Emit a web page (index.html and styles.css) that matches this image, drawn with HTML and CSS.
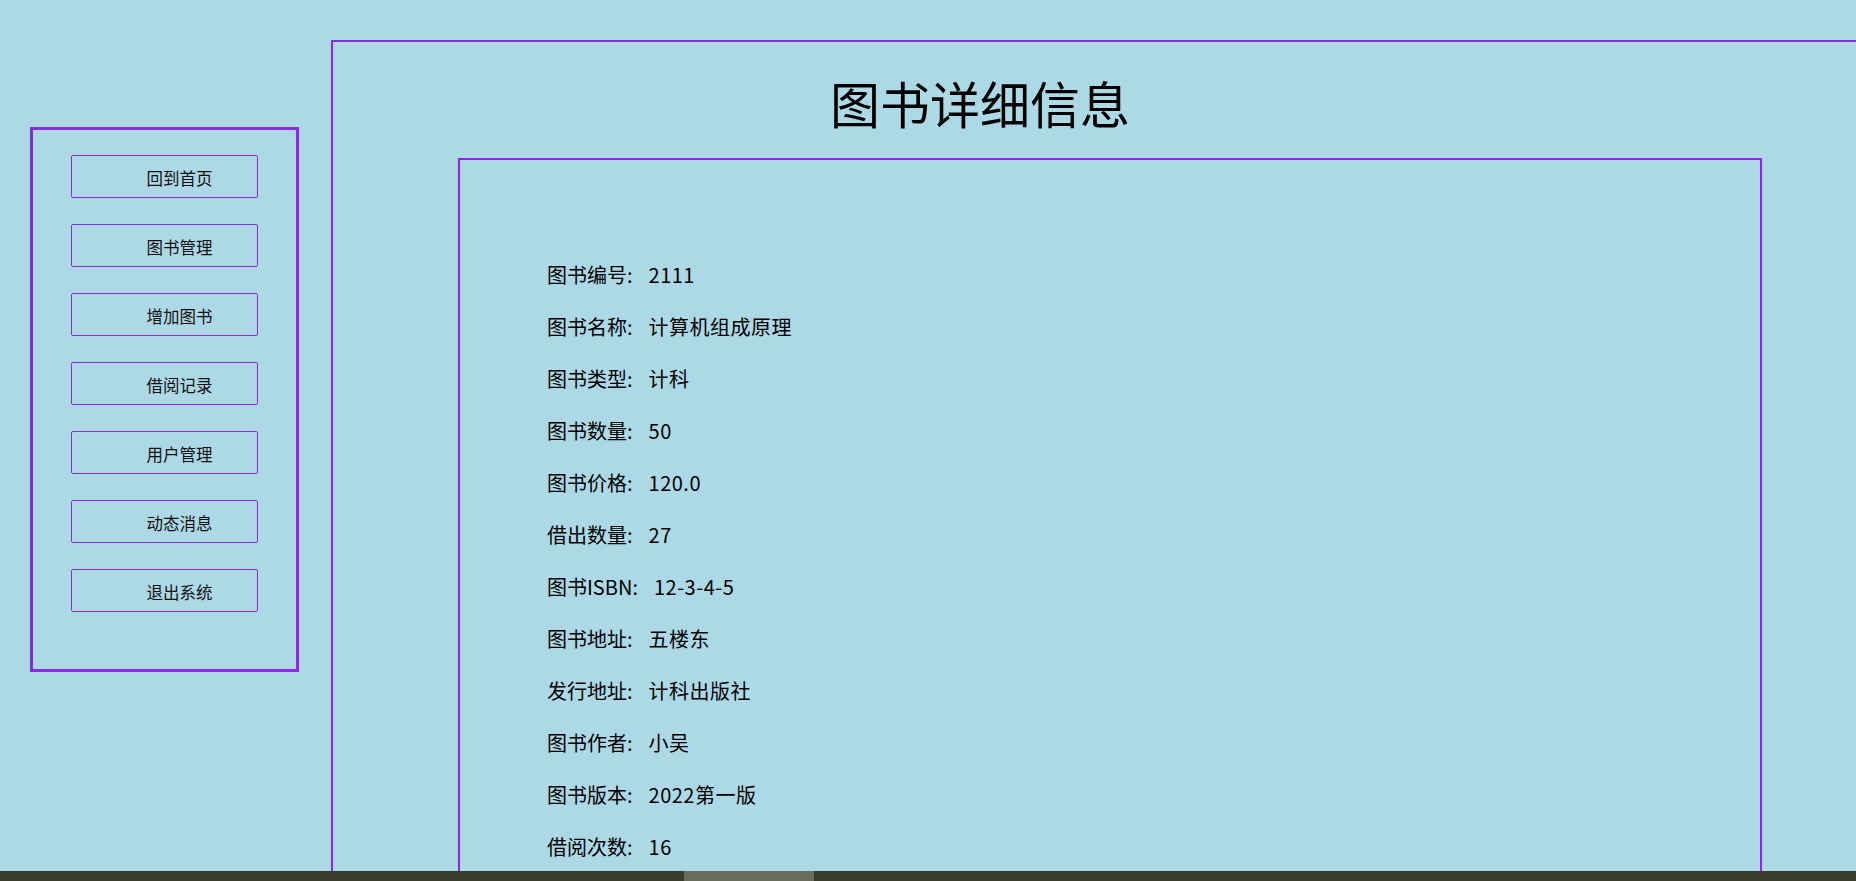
FILE: index.html
```html
<!DOCTYPE html>
<html lang="zh-CN">
<head>
<meta charset="UTF-8" />
<meta name="viewport" content="width=device-width, initial-scale=1" />
<title>图书详细信息</title>
<link rel="stylesheet" href="styles.css">
</head>
<body>

  <div class="page">
    <div class="sidebar">
      <button class="nav-btn">回到首页</button>
      <button class="nav-btn">图书管理</button>
      <button class="nav-btn">增加图书</button>
      <button class="nav-btn">借阅记录</button>
      <button class="nav-btn">用户管理</button>
      <button class="nav-btn">动态消息</button>
      <button class="nav-btn">退出系统</button>
    </div>

    <div class="main">
      <h1 class="title">图书详细信息</h1>

      <div class="detail-box">
        <div class="row"><span class="label">图书编号:</span><span class="value">2111</span></div>
        <div class="row"><span class="label">图书名称:</span><span class="value">计算机组成原理</span></div>
        <div class="row"><span class="label">图书类型:</span><span class="value">计科</span></div>
        <div class="row"><span class="label">图书数量:</span><span class="value">50</span></div>
        <div class="row"><span class="label">图书价格:</span><span class="value">120.0</span></div>
        <div class="row"><span class="label">借出数量:</span><span class="value">27</span></div>
        <div class="row"><span class="label">图书ISBN:</span><span class="value">12-3-4-5</span></div>
        <div class="row"><span class="label">图书地址:</span><span class="value">五楼东</span></div>
        <div class="row"><span class="label">发行地址:</span><span class="value">计科出版社</span></div>
        <div class="row"><span class="label">图书作者:</span><span class="value">小吴</span></div>
        <div class="row"><span class="label">图书版本:</span><span class="value">2022第一版</span></div>
        <div class="row"><span class="label">借阅次数:</span><span class="value">16</span></div>
      </div>
    </div>
  </div>

  <div class="taskbar">
    <span class="task-thumb"></span>
  </div>

</body>
</html>
```

FILE: styles.css
```css
html, body {
  margin: 0;
  overflow: hidden;
}
body {
  font-family: "Noto Sans CJK SC", "Noto Sans", sans-serif;
  background: #add8e6;
  color: #000;
}
.page {
  display: flex;
  align-items: flex-start;
  padding-left: 30px;
}
.sidebar {
  flex-shrink: 0;
  margin-top: 127px;
  width: 269px;
  border: 3px solid #8a2be2;
  padding: 25px 0 57px 38px;
  box-sizing: border-box;
  display: flex;
  flex-direction: column;
  gap: 26px;
}
.nav-btn {
  width: 187px;
  height: 43px;
  background: transparent;
  border: 1px solid #8a2be2;
  border-radius: 2px;
  font-family: "Noto Sans CJK SC", sans-serif;
  font-size: 16.5px;
  color: #111;
  padding: 2px 0 0 30px;
  text-align: center;
  cursor: pointer;
}
.main {
  flex-shrink: 0;
  width: 1700px;
  margin: 40px 0 0 32px;
  border: 2px solid #8a2be2;
  height: 1000px;
}
.title {
  margin: 34px 0 0 497px;
  font-size: 50px;
  font-weight: normal;
  line-height: 52px;
}
.detail-box {
  margin: 30px 0 0 125px;
  width: 1304px;
  box-sizing: border-box;
  border: 2px solid #8a2be2;
  padding: 89px 0 0 87px;
  height: 900px;
}
.row {
  font-size: 20px;
  line-height: 52px;
}
.value {
  letter-spacing: 0.5px;
}
.label {
  margin-right: 16px;
}
.taskbar {
  position: fixed;
  left: 0;
  right: 0;
  bottom: 0;
  height: 10px;
  background: #3a3d2b;
  display: flex;
}
.task-thumb {
  margin-left: 684px;
  width: 130px;
  background: #6a6b5b;
}
```
